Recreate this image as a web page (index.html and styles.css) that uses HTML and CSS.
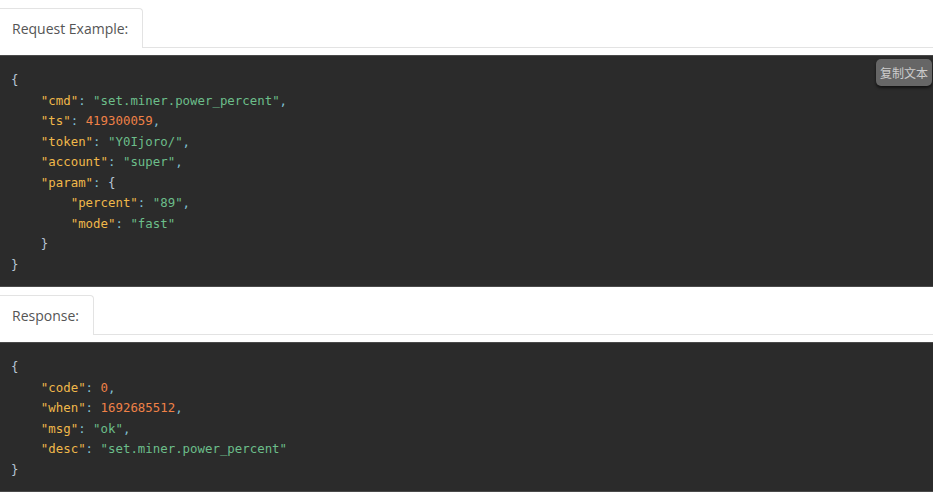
FILE: index.html
```html
<!DOCTYPE html>
<html>
<head>
<meta charset="utf-8">
<link rel="stylesheet" href="styles.css">
</head>
<body>
<section class="section">
  <div class="tabs"><div class="tab">Request Example:</div></div>
  <div class="code-wrap">
    <button class="copy">复制文本</button>
<pre class="code"><span class="p">{</span>
    <span class="k">"cmd"</span><span class="c">:</span> <span class="s">"set.miner.power_percent"</span><span class="c">,</span>
    <span class="k">"ts"</span><span class="c">:</span> <span class="n">419300059</span><span class="c">,</span>
    <span class="k">"token"</span><span class="c">:</span> <span class="s">"Y0Ijoro/"</span><span class="c">,</span>
    <span class="k">"account"</span><span class="c">:</span> <span class="s">"super"</span><span class="c">,</span>
    <span class="k">"param"</span><span class="c">:</span> <span class="p">{</span>
        <span class="k">"percent"</span><span class="c">:</span> <span class="s">"89"</span><span class="c">,</span>
        <span class="k">"mode"</span><span class="c">:</span> <span class="s">"fast"</span>
    <span class="p">}</span>
<span class="p">}</span></pre>
  </div>
</section>
<section class="section">
  <div class="tabs"><div class="tab">Response:</div></div>
  <div class="code-wrap">
<pre class="code"><span class="p">{</span>
    <span class="k">"code"</span><span class="c">:</span> <span class="n">0</span><span class="c">,</span>
    <span class="k">"when"</span><span class="c">:</span> <span class="n">1692685512</span><span class="c">,</span>
    <span class="k">"msg"</span><span class="c">:</span> <span class="s">"ok"</span><span class="c">,</span>
    <span class="k">"desc"</span><span class="c">:</span> <span class="s">"set.miner.power_percent"</span>
<span class="p">}</span></pre>
  </div>
</section>
</body>
</html>
```
FILE: styles.css
```css
html, body {
  margin: 0;
  padding: 0;
  background: #fff;
}
body {
  font-family: "Open Sans", "Noto Sans", sans-serif;
  overflow: hidden;
}
.section {
  padding-top: 8px;
}
.tabs {
  display: flex;
  border-bottom: 1px solid #e3e3e3;
  height: 39px;
  margin-bottom: 7px;
}
.tab {
  border: 1px solid #e3e3e3;
  border-left: none;
  border-bottom: none;
  border-radius: 0 4px 0 0;
  background: #fff;
  padding: 0 14px 0 12px;
  margin-bottom: -1px;
  height: 39px;
  line-height: 40px;
  font-size: 14px;
  color: #555;
}
.code-wrap {
  position: relative;
  background: #2b2b2b;
  border-top: 1px solid #4a4a4a;
  border-bottom: 1px solid #4a4a4a;
}
.code {
  margin: 0;
  padding: 14px 11px 11px;
  font-family: "DejaVu Sans Mono", "Liberation Mono", monospace;
  font-size: 12.4px;
  line-height: 20.5px;
  color: #a9b7c6;
}
.copy {
  position: absolute;
  top: 3px;
  right: 1px;
  background: #666;
  color: #ccc;
  border: none;
  border-radius: 5px;
  padding: 0 4px;
  height: 27px;
  font-size: 12px;
  font-family: "Noto Sans CJK SC", sans-serif;
  box-shadow: 0 2px 3px rgba(0,0,0,0.6);
}
.k { color: #f0b84a; }
.s { color: #6cbe8a; }
.n { color: #ef8147; }
.c { color: #7fbfd0; }
.p { color: #b7c6d6; }
```
